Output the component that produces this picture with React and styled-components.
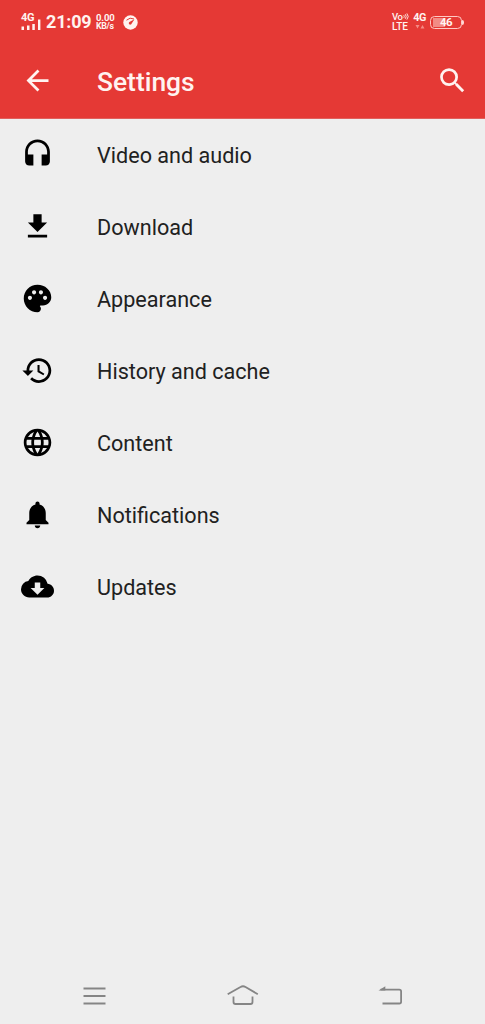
import React from 'react';
import styled, { createGlobalStyle } from 'styled-components';

const GlobalStyle = createGlobalStyle`
  * { box-sizing: border-box; }
  body { margin: 0; background: #eeeeee; font-family: Roboto, "Liberation Sans", sans-serif; }
`;

const Screen = styled.div`
  width: 485px;
  height: 1024px;
  display: flex;
  flex-direction: column;
  background: #eeeeee;
  overflow: hidden;
`;

const Header = styled.header`
  height: 119px;
  flex: none;
  background: #e53935;
  color: #fff3f0;
  border-bottom: 1px solid #e0605c;
`;

const StatusBar = styled.div`
  height: 44px;
  padding: 0 21px;
  display: flex;
  align-items: center;
  justify-content: space-between;
`;

const StatusGroup = styled.div`
  display: flex;
  align-items: center;
`;

const Stack = styled.div`
  display: flex;
  flex-direction: column;
  align-items: ${(p) => p.$align || 'flex-start'};
  margin-left: ${(p) => p.$left || 0}px;
  width: ${(p) => p.$width}px;
`;

const Tiny = styled.span`
  font-size: ${(p) => p.$size}px;
  line-height: ${(p) => p.$line}px;
  font-weight: ${(p) => p.$weight || 700};
  letter-spacing: ${(p) => p.$spacing || 0}px;
  white-space: nowrap;
`;

const Clock = styled.span`
  margin-left: 5px;
  width: 46px;
  font-size: 18px;
  line-height: 20px;
  font-weight: 700;
  letter-spacing: -0.2px;
  white-space: nowrap;
`;

const Battery = styled.div`
  display: flex;
  align-items: center;
  margin-left: 4px;
`;

const BatteryBody = styled.div`
  width: 32px;
  height: 13px;
  border: 1px solid #ffc9c4;
  border-radius: 4.5px;
  padding: 1px;
  background: linear-gradient(90deg, #f28b85 0 12px, transparent 12px) 2px 1px / 28px 9px no-repeat;
  display: flex;
  align-items: center;
  justify-content: center;
`;

const BatteryTip = styled.div`
  width: 2px;
  height: 5px;
  border-radius: 0 2px 2px 0;
  background: #ffd9d5;
`;

const Toolbar = styled.div`
  height: 73px;
  padding: 0 16px 0 21px;
  display: flex;
  align-items: center;
`;

const Title = styled.h1`
  flex: 1;
  margin: 2px 0 0 43px;
  font-size: 26.4px;
  line-height: 32px;
  font-weight: 500;
`;

const List = styled.main`
  flex: 1;
`;

const Row = styled.div`
  height: 72px;
  padding: 0 0 2px 21px;
  display: flex;
  align-items: center;
`;

const Label = styled.span`
  margin: 4px 0 0 43px;
  font-size: 21.6px;
  line-height: 30px;
  color: #212121;
`;

const Icon = styled.svg`
  width: 33px;
  height: 33px;
  flex: none;
  display: block;
  fill: currentColor;
`;

const Glyph = styled.svg`
  display: block;
  flex: none;
  overflow: visible;
  margin-left: ${(p) => p.$left || 0}px;
`;

const NavBar = styled.nav`
  height: 56px;
  flex: none;
  display: grid;
  grid-template-columns: 145px 152px 1fr;
  align-items: center;
  padding: 0 81px 0 82px;
`;

const paths = {
  back: 'M20 11H7.83l5.59-5.59L12 4l-8 8 8 8 1.41-1.41L7.83 13H20v-2z',
  search:
    'M15.5 14h-.79l-.28-.27A6.471 6.471 0 0 0 16 9.5 6.5 6.5 0 1 0 9.5 16c1.61 0 3.09-.59 4.23-1.57l.27.28v.79l5 4.99L20.49 19l-4.99-5zm-6 0C7.01 14 5 11.99 5 9.5S7.01 5 9.5 5 14 7.01 14 9.5 11.99 14 9.5 14z',
};

const items = [
  {
    label: 'Video and audio',
    d: 'M12 1c-4.97 0-9 4.03-9 9v7c0 1.66 1.34 3 3 3h3v-8H5v-2c0-3.87 3.13-7 7-7s7 3.13 7 7v2h-4v8h3c1.66 0 3-1.34 3-3v-7c0-4.97-4.03-9-9-9z',
  },
  { label: 'Download', d: 'M19 9h-4V3H9v6H5l7 7 7-7zM5 18v2h14v-2H5z' },
  {
    label: 'Appearance',
    d: 'M12 2C6.49 2 2 6.49 2 12s4.49 10 10 10c1.38 0 2.5-1.12 2.5-2.5 0-.61-.23-1.2-.64-1.67-.08-.1-.13-.21-.13-.33 0-.28.22-.5.5-.5H16c3.31 0 6-2.69 6-6 0-4.96-4.49-9-10-9zm5.5 11c-.83 0-1.5-.67-1.5-1.5s.67-1.5 1.5-1.5 1.5.67 1.5 1.5-.67 1.5-1.5 1.5zm-3-4c-.83 0-1.5-.67-1.5-1.5S13.67 6 14.5 6s1.5.67 1.5 1.5S15.33 9 14.5 9zM5 11.5c0-.83.67-1.5 1.5-1.5s1.5.67 1.5 1.5S7.33 13 6.5 13 5 12.33 5 11.5zm6-4c0 .83-.67 1.5-1.5 1.5S8 8.33 8 7.5 8.67 6 9.5 6s1.5.67 1.5 1.5z',
  },
  {
    label: 'History and cache',
    d: 'M13 3c-4.97 0-9 4.03-9 9H1l3.89 3.89.07.14L9 12H6c0-3.87 3.13-7 7-7s7 3.13 7 7-3.13 7-7 7c-1.93 0-3.68-.79-4.94-2.06l-1.42 1.42C8.27 19.99 10.51 21 13 21c4.97 0 9-4.03 9-9s-4.03-9-9-9zm-1 5v5l4.28 2.54.72-1.21-3.5-2.08V8H12z',
  },
  {
    label: 'Content',
    d: 'M11.99 2C6.47 2 2 6.48 2 12s4.47 10 9.99 10C17.52 22 22 17.52 22 12S17.52 2 11.99 2zm6.93 6h-2.95a15.65 15.65 0 0 0-1.38-3.56A8.03 8.03 0 0 1 18.92 8zM12 4.04c.83 1.2 1.48 2.53 1.91 3.96h-3.82c.43-1.43 1.08-2.76 1.91-3.96zM4.26 14C4.1 13.36 4 12.69 4 12s.1-1.36.26-2h3.38c-.08.66-.14 1.32-.14 2s.06 1.34.14 2H4.26zm.82 2h2.95c.32 1.25.78 2.45 1.38 3.56A7.987 7.987 0 0 1 5.08 16zm2.95-8H5.08a7.987 7.987 0 0 1 4.33-3.56A15.65 15.65 0 0 0 8.03 8zM12 19.96c-.83-1.2-1.48-2.53-1.91-3.96h3.82c-.43 1.43-1.08 2.76-1.91 3.96zM14.34 14H9.66c-.09-.66-.16-1.32-.16-2s.07-1.35.16-2h4.68c.09.65.16 1.32.16 2s-.07 1.34-.16 2zm.25 5.56c.6-1.11 1.06-2.31 1.38-3.56h2.95a8.03 8.03 0 0 1-4.33 3.56zM16.36 14c.08-.66.14-1.32.14-2s-.06-1.34-.14-2h3.38c.16.64.26 1.31.26 2s-.1 1.36-.26 2h-3.38z',
  },
  {
    label: 'Notifications',
    d: 'M12 22c1.1 0 2-.9 2-2h-4c0 1.1.89 2 2 2zm6-6v-5c0-3.07-1.64-5.64-4.5-6.32V4c0-.83-.67-1.5-1.5-1.5s-1.5.67-1.5 1.5v.68C7.63 5.36 6 7.92 6 11v5l-2 2v1h16v-1l-2-2z',
  },
  {
    label: 'Updates',
    d: 'M19.35 10.04A7.49 7.49 0 0 0 12 4C9.11 4 6.6 5.64 5.35 8.04A5.994 5.994 0 0 0 0 14c0 3.31 2.69 6 6 6h13c2.76 0 5-2.24 5-5 0-2.64-2.05-4.78-4.65-4.96zM17 13l-5 5-5-5h3V9h4v4h3z',
  },
];

function MaterialIcon({ d }) {
  return (
    <Icon viewBox="0 0 24 24">
      <path d={d} />
    </Icon>
  );
}

function Status() {
  return (
    <StatusBar>
      <StatusGroup>
        <Stack $width={20}>
          <Tiny $size={11} $line={9} $spacing={-0.3}>4G</Tiny>
          <Glyph width="20" height="9" fill="currentColor">
            <path d="M0.5 4.5h2.5v3.5h-2.5zM6 3.5h2.5v4.5h-2.5zM11.3 2h2.5v6h-2.5zM17 -2.5h2.4v10.5h-2.4z" />
          </Glyph>
        </Stack>
        <Clock>21:09</Clock>
        <Stack $width={20} $left={4}>
          <Tiny $size={9.5} $line={9} $spacing={-0.1}>0.00</Tiny>
          <Tiny $size={8.8} $line={9} $spacing={-0.35}>KB/s</Tiny>
        </Stack>
        <Glyph width="15" height="15" viewBox="0 0 15 15" $left={7}>
          <circle cx="7.5" cy="7.5" r="7.2" fill="currentColor" />
          <path d="M3.5 5.2Q7 1.8 11 4" fill="none" stroke="#e53935" strokeWidth="1" />
          <path d="M11.5 4.2L8.7 8.6a1.5 1.5 0 1 1-1.9-1.9z" fill="#e53935" />
        </Glyph>
      </StatusGroup>
      <StatusGroup>
        <Stack $width={18}>
          <StatusGroup>
            <Tiny $size={9.5} $line={9} $weight={500} $spacing={-0.4}>Vo</Tiny>
            <Glyph width="6" height="7" viewBox="0 0 6 8" fill="none" stroke="currentColor">
              <path d="M0.5 2.5q1 1.5 0 3M2.2 1.4q2 2.6 0 5.2M4 0.5q3 3.5 0 7" />
            </Glyph>
          </StatusGroup>
          <Tiny $size={10} $line={11} $weight={500}>LTE</Tiny>
        </Stack>
        <Stack $width={13} $left={3} $align="center">
          <Tiny $size={10.8} $line={10} $spacing={-0.5}>4G</Tiny>
          <Glyph width="10" height="8" viewBox="0 0 10 8" fill="#f48b85">
            <path d="M0.5 2h4l-2 3.5zM5.5 5.5h4l-2-3.5z" />
          </Glyph>
        </Stack>
        <Battery>
          <BatteryBody>
            <Tiny $size={11.5} $line={11} $spacing={-0.5}>46</Tiny>
          </BatteryBody>
          <BatteryTip />
        </Battery>
      </StatusGroup>
    </StatusBar>
  );
}

export default function App() {
  return (
    <>
      <GlobalStyle />
      <Screen>
        <Header>
          <Status />
          <Toolbar>
            <MaterialIcon d={paths.back} />
            <Title>Settings</Title>
            <MaterialIcon d={paths.search} />
          </Toolbar>
        </Header>
        <List>
          {items.map((item) => (
            <Row key={item.label}>
              <MaterialIcon d={item.d} />
              <Label>{item.label}</Label>
            </Row>
          ))}
        </List>
        <NavBar>
          <Glyph width="25" height="24" fill="none" stroke="#858585" strokeWidth="1.8">
            <path d="M1.5 4.5h22M1.5 12h22M1.5 19.5h22" />
          </Glyph>
          <Glyph width="34" height="24" fill="none" stroke="#858585" strokeWidth="1.8">
            <path d="M0.7 10.2L13.5 3q2.5-1.5 5 0l12.3 7.2M6.5 12.5v5.5q0 2 2 2h15q2 0 2-2v-5.5" />
          </Glyph>
          <Glyph width="25" height="24" fill="none" stroke="#858585" strokeWidth="1.8">
            <path d="M1.5 5.7h18.8q1.8 0 1.8 1.8v10.2q0 1.8-1.8 1.8H3.5" />
            <path d="M-0.5 6.6L6.3 2.2V6.6z" fill="#858585" stroke="none" />
          </Glyph>
        </NavBar>
      </Screen>
    </>
  );
}
